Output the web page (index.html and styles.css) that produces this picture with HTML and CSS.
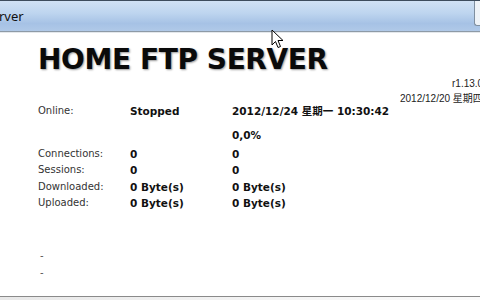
FILE: index.html
```html
<!DOCTYPE html>
<html>
<head>
<meta charset="utf-8">
<link rel="stylesheet" href="styles.css">
</head>
<body>
<div class="window">
  <div class="titlebar">
    <span class="title">rver</span>
    <span class="tbtn"></span>
  </div>
  <div class="content">
    <div class="header">
      <h1 class="logo">HOME FTP SERVER</h1>
      <div class="ver">
        <div class="ver-num">r1.13.0</div>
        <div class="ver-date">2012/12/20 星期四</div>
      </div>
    </div>
    <div class="stats">
      <div class="row r-online"><span class="lbl">Online:</span><span class="val">Stopped</span><span class="val">2012/12/24 星期一 10:30:42</span></div>
      <div class="row r-pct"><span class="lbl"></span><span class="val"></span><span class="val">0,0%</span></div>
      <div class="row r-conn"><span class="lbl">Connections:</span><span class="val">0</span><span class="val">0</span></div>
      <div class="row"><span class="lbl">Sessions:</span><span class="val">0</span><span class="val">0</span></div>
      <div class="row"><span class="lbl">Downloaded:</span><span class="val">0 Byte(s)</span><span class="val">0 Byte(s)</span></div>
      <div class="row"><span class="lbl">Uploaded:</span><span class="val">0 Byte(s)</span><span class="val">0 Byte(s)</span></div>
    </div>
    <div class="dashes">
      <div class="dash">-</div>
      <div class="dash">-</div>
    </div>
  </div>
  <div class="footer"></div>
  <svg class="cursor" width="13" height="20" viewBox="0 0 13 20"><path d="M1 1 L1 16 L4.5 12.5 L7 18.5 L9.5 17.5 L7 11.5 L12 11.5 Z" fill="#fff" stroke="#000" stroke-width="1" stroke-linejoin="round"/></svg>
</div>
</body>
</html>
```

FILE: styles.css
```css
html, body {
  margin: 0;
  padding: 0;
  background: #fff;
}
body {
  width: 480px;
  height: 300px;
  overflow: hidden;
  font-family: "DejaVu Sans", "Noto Sans CJK SC", sans-serif;
}
.window {
  position: relative;
  height: 300px;
  display: flex;
  flex-direction: column;
}
.titlebar {
  height: 30px;
  border-top: 1px solid #3d4c5c;
  border-bottom: 1px solid #8e9aa6;
  background: linear-gradient(180deg, #d0e1f4 0%, #bed5ef 40%, #a6c2e5 75%, #b0c9e8 100%);
  display: flex;
  align-items: center;
}
.title {
  font-family: "Noto Sans", sans-serif;
  font-size: 13px;
  color: #111;
  margin-left: -1px;
}
.tbtn {
  margin-left: auto;
  align-self: flex-start;
  width: 5px;
  height: 24px;
  border-left: 1px solid #7f8fa0;
  border-bottom: 1px solid #7f8fa0;
  border-radius: 0 0 0 3px;
  background: #eef3f8;
}
.content {
  flex: 1;
  padding-left: 38px;
  border-top: 1px solid #e4e8ec;
}
.header {
  display: flex;
  height: 32px;
  margin-top: 11px;
}
.logo {
  margin: 0;
  font-family: "DejaVu Sans", sans-serif;
  font-weight: bold;
  font-size: 28px;
  line-height: 32px;
  letter-spacing: -0.4px;
  color: #0a0a0a;
  text-shadow: 1px 1px 2px #9a9a9a;
  white-space: nowrap;
}
.ver {
  margin-left: auto;
  width: 80px;
  margin-top: 32px;
  white-space: nowrap;
  font-family: "Liberation Sans", "Noto Sans CJK SC", sans-serif;
  font-size: 10px;
  line-height: 15px;
  color: #222;
}
.ver-num {
  padding-left: 52px;
}
.stats {
  margin-top: 27px;
}
.row {
  display: flex;
  height: 16.5px;
  line-height: 16.5px;
  white-space: nowrap;
}
.r-pct {
  margin-top: 7.5px;
}
.r-conn {
  margin-top: 2px;
}
.lbl {
  width: 92px;
  font-size: 10px;
  color: #333;
}
.val {
  width: 102px;
  font-size: 10.5px;
  font-weight: bold;
  color: #111;
}
.dashes {
  margin-top: 35px;
  padding-left: 2px;
}
.dash {
  height: 17px;
  line-height: 17px;
  font-size: 10px;
  color: #555;
}
.footer {
  height: 3px;
  border-top: 1px solid #8a8a8a;
  background: linear-gradient(90deg, #e8e8e8 0%, #f4f4f4 58%, #fafafa 100%);
}
.cursor {
  position: absolute;
  left: 271px;
  top: 29px;
}
```
